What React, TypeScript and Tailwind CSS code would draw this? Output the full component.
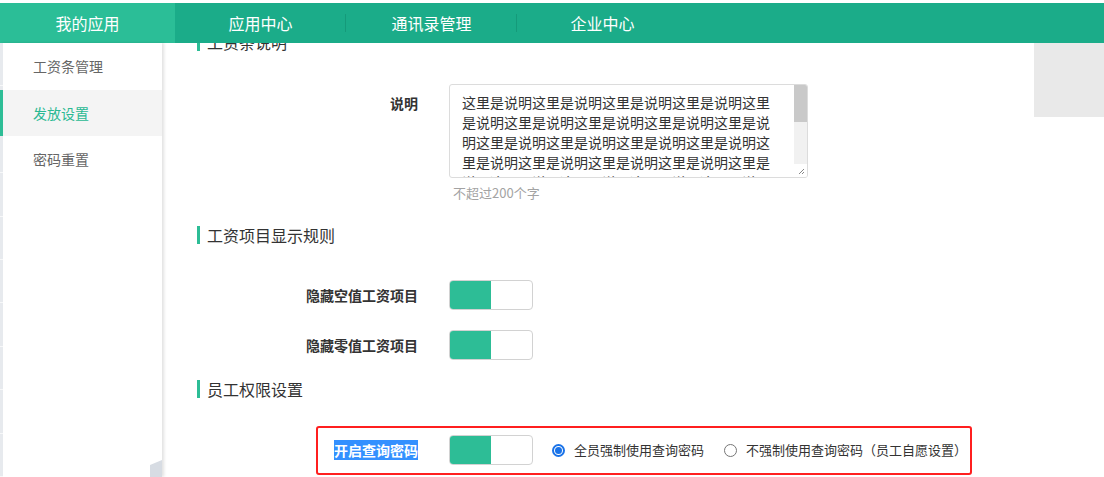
import React from "react";

const FONT = "font-['Microsoft_YaHei','Noto_Sans_CJK_SC','Noto_Sans',sans-serif]";

const NOTE = "这里是说明".repeat(30);

function SectionTitle({ text, className = "" }: { text: string; className?: string }) {
  return (
    <div className={`flex items-center h-[18px] ${className}`}>
      <span className="w-[3px] h-[18px] bg-[#2dbd96]" />
      <span className="ml-[7px] text-[16px] leading-[18px] text-[#333]">{text}</span>
    </div>
  );
}

function Toggle() {
  return (
    <div className="flex w-[84px] h-[30px] shrink-0 rounded-[4px] border border-[#d2d2d2] bg-white overflow-hidden">
      <div className="w-[41px] h-full bg-[#2dbd96]" />
    </div>
  );
}

function Radio({ checked, label }: { checked?: boolean; label: string }) {
  return (
    <label className="flex items-center">
      {checked ? (
        <span className="flex items-center justify-center w-[13px] h-[13px] rounded-full border-2 border-[#1a73e8] bg-white">
          <span className="w-[7px] h-[7px] rounded-full bg-[#1a73e8]" />
        </span>
      ) : (
        <span className="w-[13px] h-[13px] rounded-full border border-[#767676] bg-white" />
      )}
      <span className="ml-[9px] text-[13px] text-[#333]">{label}</span>
    </label>
  );
}

function SideNav() {
  const items = ["工资条管理", "发放设置", "密码重置"];
  return (
    <aside className="relative flex w-[162px] shrink-0 bg-white shadow-[2px_0_3px_rgba(0,0,0,0.12)] z-10">
      {/* left rail */}
      <div className="flex flex-col w-[3px] bg-[#e7eaee]">
        {Array.from({ length: 10 }).map((_, i) => (
          <div key={i} className="h-[48px] border-b border-[#f7f8f9]" />
        ))}
      </div>
      <ul className="flex-1">
        {items.map((t) =>
          t === "发放设置" ? (
            <li key={t} className="relative -ml-[3px] flex items-center h-[46px] pl-[30px] bg-[#f4f4f4] text-[14px] text-[#2ab993] border-l-[3px] border-[#2dbd96]">
              {t}
            </li>
          ) : (
            <li key={t} className="flex items-center h-[47px] pl-[30px] text-[14px] text-[#666]">
              {t}
            </li>
          )
        )}
      </ul>
      {/* corner */}
      <div className="absolute right-0 bottom-0 w-[12px] h-[17px] bg-[#d7dce3] [clip-path:polygon(100%_0,100%_100%,0_100%,0_30%)]" />
    </aside>
  );
}

export default function App() {
  const tabs = ["我的应用", "应用中心", "通讯录管理", "企业中心"];
  return (
    <div className={`w-[1104px] h-[477px] overflow-hidden bg-white flex flex-col ${FONT}`}>
      <div className="h-[3px] bg-white" />
      <nav className="flex h-[40px] shrink-0 bg-[#1bac89] text-white text-[16px]">
        {tabs.map((t, i) => (
          <div
            key={t}
            className={`relative flex items-center justify-center ${i === 0 ? "w-[175px] bg-[#2bbe97]" : "w-[171px]"}`}
          >
            {t}
            {(i === 1 || i === 2) && <span className="absolute right-0 top-[11px] w-px h-[18px] bg-[#159a7a]" />}
          </div>
        ))}
      </nav>

      <div className="flex flex-1 min-h-0">
        <SideNav />

        <main className="relative flex-1 pl-[35px] overflow-hidden">
          <div className="absolute right-0 top-0 w-[70px] h-[74px] bg-[#e9e9e9]" />

          <SectionTitle text="工资条说明" className="-mt-[10px]" />

          {/* 说明 */}
          <div className="flex mt-[33px]">
            <div className="w-[221px] pt-[9px] text-right text-[14px] font-bold text-[#333]">说明</div>
            <div className="ml-[31px] flex flex-col">
              <div className="flex w-[359px] h-[94px] rounded-[3px] border border-[#dcdcdc] overflow-hidden">
                <div className="flex-1 overflow-hidden pl-[12px] pt-[7px]">
                  <p className="w-[316px] text-[14px] leading-[20px] text-[#333] break-all">{NOTE}</p>
                </div>
                <div className="relative flex flex-col w-[13px] bg-[#f1f1f1]">
                  <div className="h-[37px] bg-[#c9c9c9]" />
                  <div className="flex-1" />
                  <div className="h-[13px] bg-white flex items-end justify-end p-[2px]">
                    <svg width="7" height="7" viewBox="0 0 7 7">
                      <path d="M6 1L1 6M6 4L4 6" stroke="#888" strokeWidth="1" />
                    </svg>
                  </div>
                </div>
              </div>
              <div className="mt-[6px] pl-[4px] text-[13px] leading-[18px] text-[#a3a3a3]">不超过200个字</div>
            </div>
          </div>

          <SectionTitle text="工资项目显示规则" className="mt-[24px]" />

          <div className="flex items-center mt-[36px]">
            <div className="w-[221px] text-right text-[14px] font-bold text-[#333]">隐藏空值工资项目</div>
            <div className="ml-[31px]"><Toggle /></div>
          </div>
          <div className="flex items-center mt-[20px]">
            <div className="w-[221px] text-right text-[14px] font-bold text-[#333]">隐藏零值工资项目</div>
            <div className="ml-[31px]"><Toggle /></div>
          </div>

          <SectionTitle text="员工权限设置" className="mt-[20px]" />

          <div className="flex items-center w-[656px] ml-[119px] mt-[28px] pt-[7px] pb-[8px] border-2 border-[#ff1f1f] rounded-[3px]">
            <div className="w-[100px] text-right text-[14px] font-bold">
              <span className="bg-[#3390ff] text-white">开启查询密码</span>
            </div>
            <div className="ml-[31px]"><Toggle /></div>
            <div className="ml-[19px] flex items-center gap-[20px]">
              <Radio checked label="全员强制使用查询密码" />
              <Radio label="不强制使用查询密码（员工自愿设置）" />
            </div>
          </div>
        </main>
      </div>
    </div>
  );
}
